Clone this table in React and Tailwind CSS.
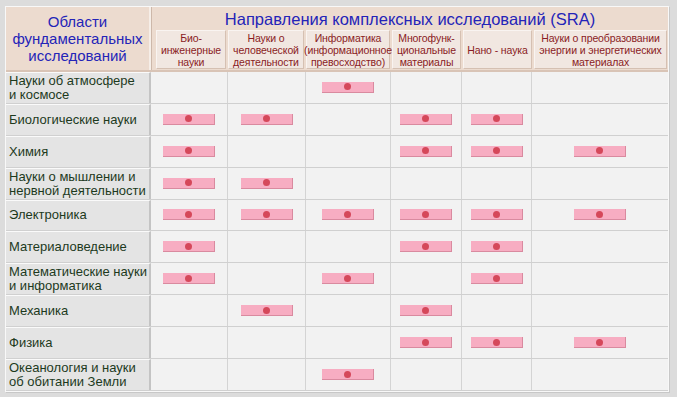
import React from "react";

const cols = [
  ["Био-", "инженерные", "науки"],
  ["Науки о", "человеческой", "деятельности"],
  ["Информатика", "(информационное", "превосходство)"],
  ["Многофунк-", "циональные", "материалы"],
  ["Нано - наука"],
  ["Науки о преобразовании", "энергии и энергетических", "материалах"],
];

const rows = [
  { label: ["Науки об атмосфере", "и космосе"], marks: [3] },
  { label: ["Биологические науки"], marks: [1, 2, 4, 5] },
  { label: ["Химия"], marks: [1, 4, 5, 6] },
  { label: ["Науки о мышлении и", "нервной деятельности"], marks: [1, 2] },
  { label: ["Электроника"], marks: [1, 2, 3, 4, 5, 6] },
  { label: ["Материаловедение"], marks: [1, 4, 5] },
  { label: ["Математические науки", "и информатика"], marks: [1, 3, 5] },
  { label: ["Механика"], marks: [2, 4] },
  { label: ["Физика"], marks: [4, 5, 6] },
  { label: ["Океанология и науки", "об обитании Земли"], marks: [3] },
];

const widths = ["w-[77px]", "w-[78px]", "w-[85px]", "w-[71px]", "w-[70px]", "w-[136px]"];
const headWidths = ["w-[70px]", "w-[76px]", "w-[84px]", "w-[69px]", "w-[69px]", "w-[133px]"];

function Mark() {
  return (
    <div className="w-[52px] h-[11px] bg-[#f7adc2] border-b border-r border-[#d98a9f] flex items-center justify-center">
      <div className="w-[7px] h-[7px] rounded-full bg-[#d5485a]" />
    </div>
  );
}

export default function App() {
  return (
    <div className="w-[677px] h-[397px] bg-[#dcdcdc] pt-[6px] pl-[5px]" style={{ fontFamily: "Arial, 'Liberation Sans', sans-serif" }}>
      <div className="w-[664px] h-[386px] bg-[#f2f2f2] border border-[#f8f8f8] shadow-[1px_1px_0_#c8c8c8] flex flex-col">
        {/* header */}
        <div className="flex h-[65px] bg-[#ecdbcf] border-b-2 border-[#d9c4b6]">
          <div className="w-[145px] shrink-0 flex flex-col items-center justify-center text-[15px] leading-[17px] text-[#2424b8] border-r-2 border-[#f6eee8] text-center">
            <span>Области</span>
            <span>фундаментальных</span>
            <span>исследований</span>
          </div>
          <div className="flex-1 flex flex-col border-l border-[#cdb8aa]">
            <div className="h-[23px] flex items-center justify-center text-[16.5px] text-[#2424b8] pt-[1px]">
              Направления комплексных исследований (SRA)
            </div>
            <div className="flex pl-[4px] gap-[2px] h-[39px]">
              {cols.map((c, i) => (
                <div
                  key={i}
                  className={`${headWidths[i]} shrink-0 flex flex-col items-center justify-center text-[10.5px] leading-[12px] tracking-[-0.1px] text-[#8a1c24] bg-[#f1e7e1] border border-[#f9f4f1] border-b-[#d5c0b2] border-r-[#d5c0b2] text-center`}
                >
                  {c.map((l) => (
                    <span key={l} className="whitespace-nowrap">{l}</span>
                  ))}
                </div>
              ))}
            </div>
          </div>
        </div>
        {/* body */}
        {rows.map((r, ri) => (
          <div key={ri} className="flex h-[32px] border-b border-[#d0d0d0]">
            <div className="w-[145px] shrink-0 bg-[#e4e4e4] border-t border-[#fafafa] border-r-2 border-r-[#c4c4c4] flex flex-col justify-center pl-[3px] text-[13px] leading-[14px] text-[#1d3a1d]">
              {r.label.map((l) => (
                <span key={l} className="whitespace-nowrap">{l}</span>
              ))}
            </div>
            {widths.map((w, ci) => (
              <div key={ci} className={`${w} shrink-0 flex items-center justify-center ${ci < 5 ? "border-r border-[#d4d4d4]" : ""}`}>
                {r.marks.includes(ci + 1) && <Mark />}
              </div>
            ))}
          </div>
        ))}
      </div>
    </div>
  );
}
